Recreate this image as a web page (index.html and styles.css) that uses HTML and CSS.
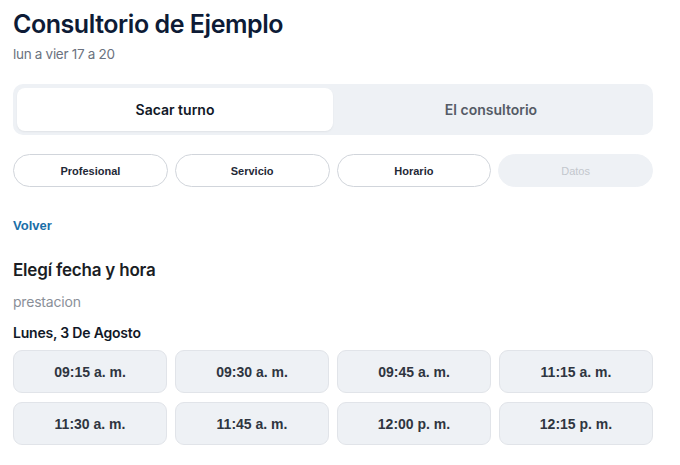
FILE: index.html
```html
<!DOCTYPE html>
<html lang="es">
<head>
<meta charset="utf-8">
<title>Consultorio de Ejemplo</title>
<link rel="stylesheet" href="styles.css">
</head>
<body>
<div class="page">
  <h1 class="title">Consultorio de Ejemplo</h1>
  <p class="subtitle">lun a vier 17 a 20</p>

  <div class="tabs">
    <div class="tab tab-active">Sacar turno</div>
    <div class="tab">El consultorio</div>
  </div>

  <div class="steps">
    <div class="step">Profesional</div>
    <div class="step">Servicio</div>
    <div class="step">Horario</div>
    <div class="step step-disabled">Datos</div>
  </div>

  <a class="back" href="#">Volver</a>

  <h2 class="section-title">Elegí fecha y hora</h2>
  <p class="service">prestacion</p>
  <h3 class="day">Lunes, 3 De Agosto</h3>

  <div class="slots">
    <div class="slot">09:15 a. m.</div>
    <div class="slot">09:30 a. m.</div>
    <div class="slot">09:45 a. m.</div>
    <div class="slot">11:15 a. m.</div>
    <div class="slot">11:30 a. m.</div>
    <div class="slot">11:45 a. m.</div>
    <div class="slot">12:00 p. m.</div>
    <div class="slot">12:15 p. m.</div>
  </div>
</div>
</body>
</html>
```
FILE: styles.css
```css
* { box-sizing: border-box; }
html, body { margin: 0; padding: 0; background: #ffffff; }
body { font-family: "Inter", "Liberation Sans", sans-serif; color: #111827; }

.page {
  width: 640px;
  margin-left: 13px;
  padding-top: 8px;
}

.title {
  margin: 0;
  font-size: 25px;
  line-height: 32px;
  font-weight: 600;
  color: #0d1b36;
  letter-spacing: -0.45px;
}

.subtitle {
  margin: 4px 0 0;
  font-size: 13.5px;
  line-height: 20px;
  color: #6b7280;
  letter-spacing: -0.3px;
}

.tabs {
  margin-top: 20px;
  display: grid;
  grid-template-columns: 1fr 1fr;
  padding: 4px;
  background: #eef1f5;
  border-radius: 10px;
  height: 51px;
}

.tab {
  display: flex;
  align-items: center;
  justify-content: center;
  font-size: 14px;
  font-weight: 600;
  color: #555b66;
  border-radius: 8px;
}

.tab-active {
  background: #ffffff;
  color: #111827;
  box-shadow: 0 1px 2px rgba(0,0,0,0.06);
}

.steps {
  margin-top: 19px;
  display: grid;
  grid-template-columns: repeat(4, 1fr);
  gap: 7px;
}

.step {
  height: 33px;
  display: flex;
  align-items: center;
  justify-content: center;
  border: 1px solid #d1d5db;
  border-radius: 17px;
  font-family: "Liberation Sans", Arial, sans-serif;
  font-size: 11px;
  font-weight: 700;
  color: #1f2937;
  background: #ffffff;
}

.step-disabled {
  border-color: #eef1f5;
  background: #eef1f5;
  color: #c3c7cd;
  font-weight: 400;
}

.back {
  display: block;
  margin-top: 31px;
  font-family: "Liberation Sans", Arial, sans-serif;
  font-size: 13px;
  font-weight: 700;
  line-height: 16px;
  color: #1a6ea8;
  text-decoration: none;
}

.section-title {
  margin: 24px 0 0;
  font-size: 17px;
  line-height: 24px;
  font-weight: 600;
  color: #1a1d24;
  letter-spacing: -0.2px;
}

.service {
  margin: 10px 0 0;
  font-size: 14px;
  line-height: 20px;
  color: #8a8f98;
  letter-spacing: -0.2px;
}

.day {
  margin: 11px 0 0;
  font-size: 14px;
  line-height: 20px;
  font-weight: 600;
  color: #111827;
  letter-spacing: -0.2px;
}

.slots {
  margin-top: 7px;
  display: grid;
  grid-template-columns: repeat(4, 1fr);
  gap: 9px 8px;
}

.slot {
  height: 43px;
  display: flex;
  align-items: center;
  justify-content: center;
  background: #eef1f5;
  border: 1px solid #e1e4e9;
  border-radius: 9px;
  font-family: "Liberation Sans", Arial, sans-serif;
  font-size: 14px;
  font-weight: 700;
  color: #2f3540;
}
```
